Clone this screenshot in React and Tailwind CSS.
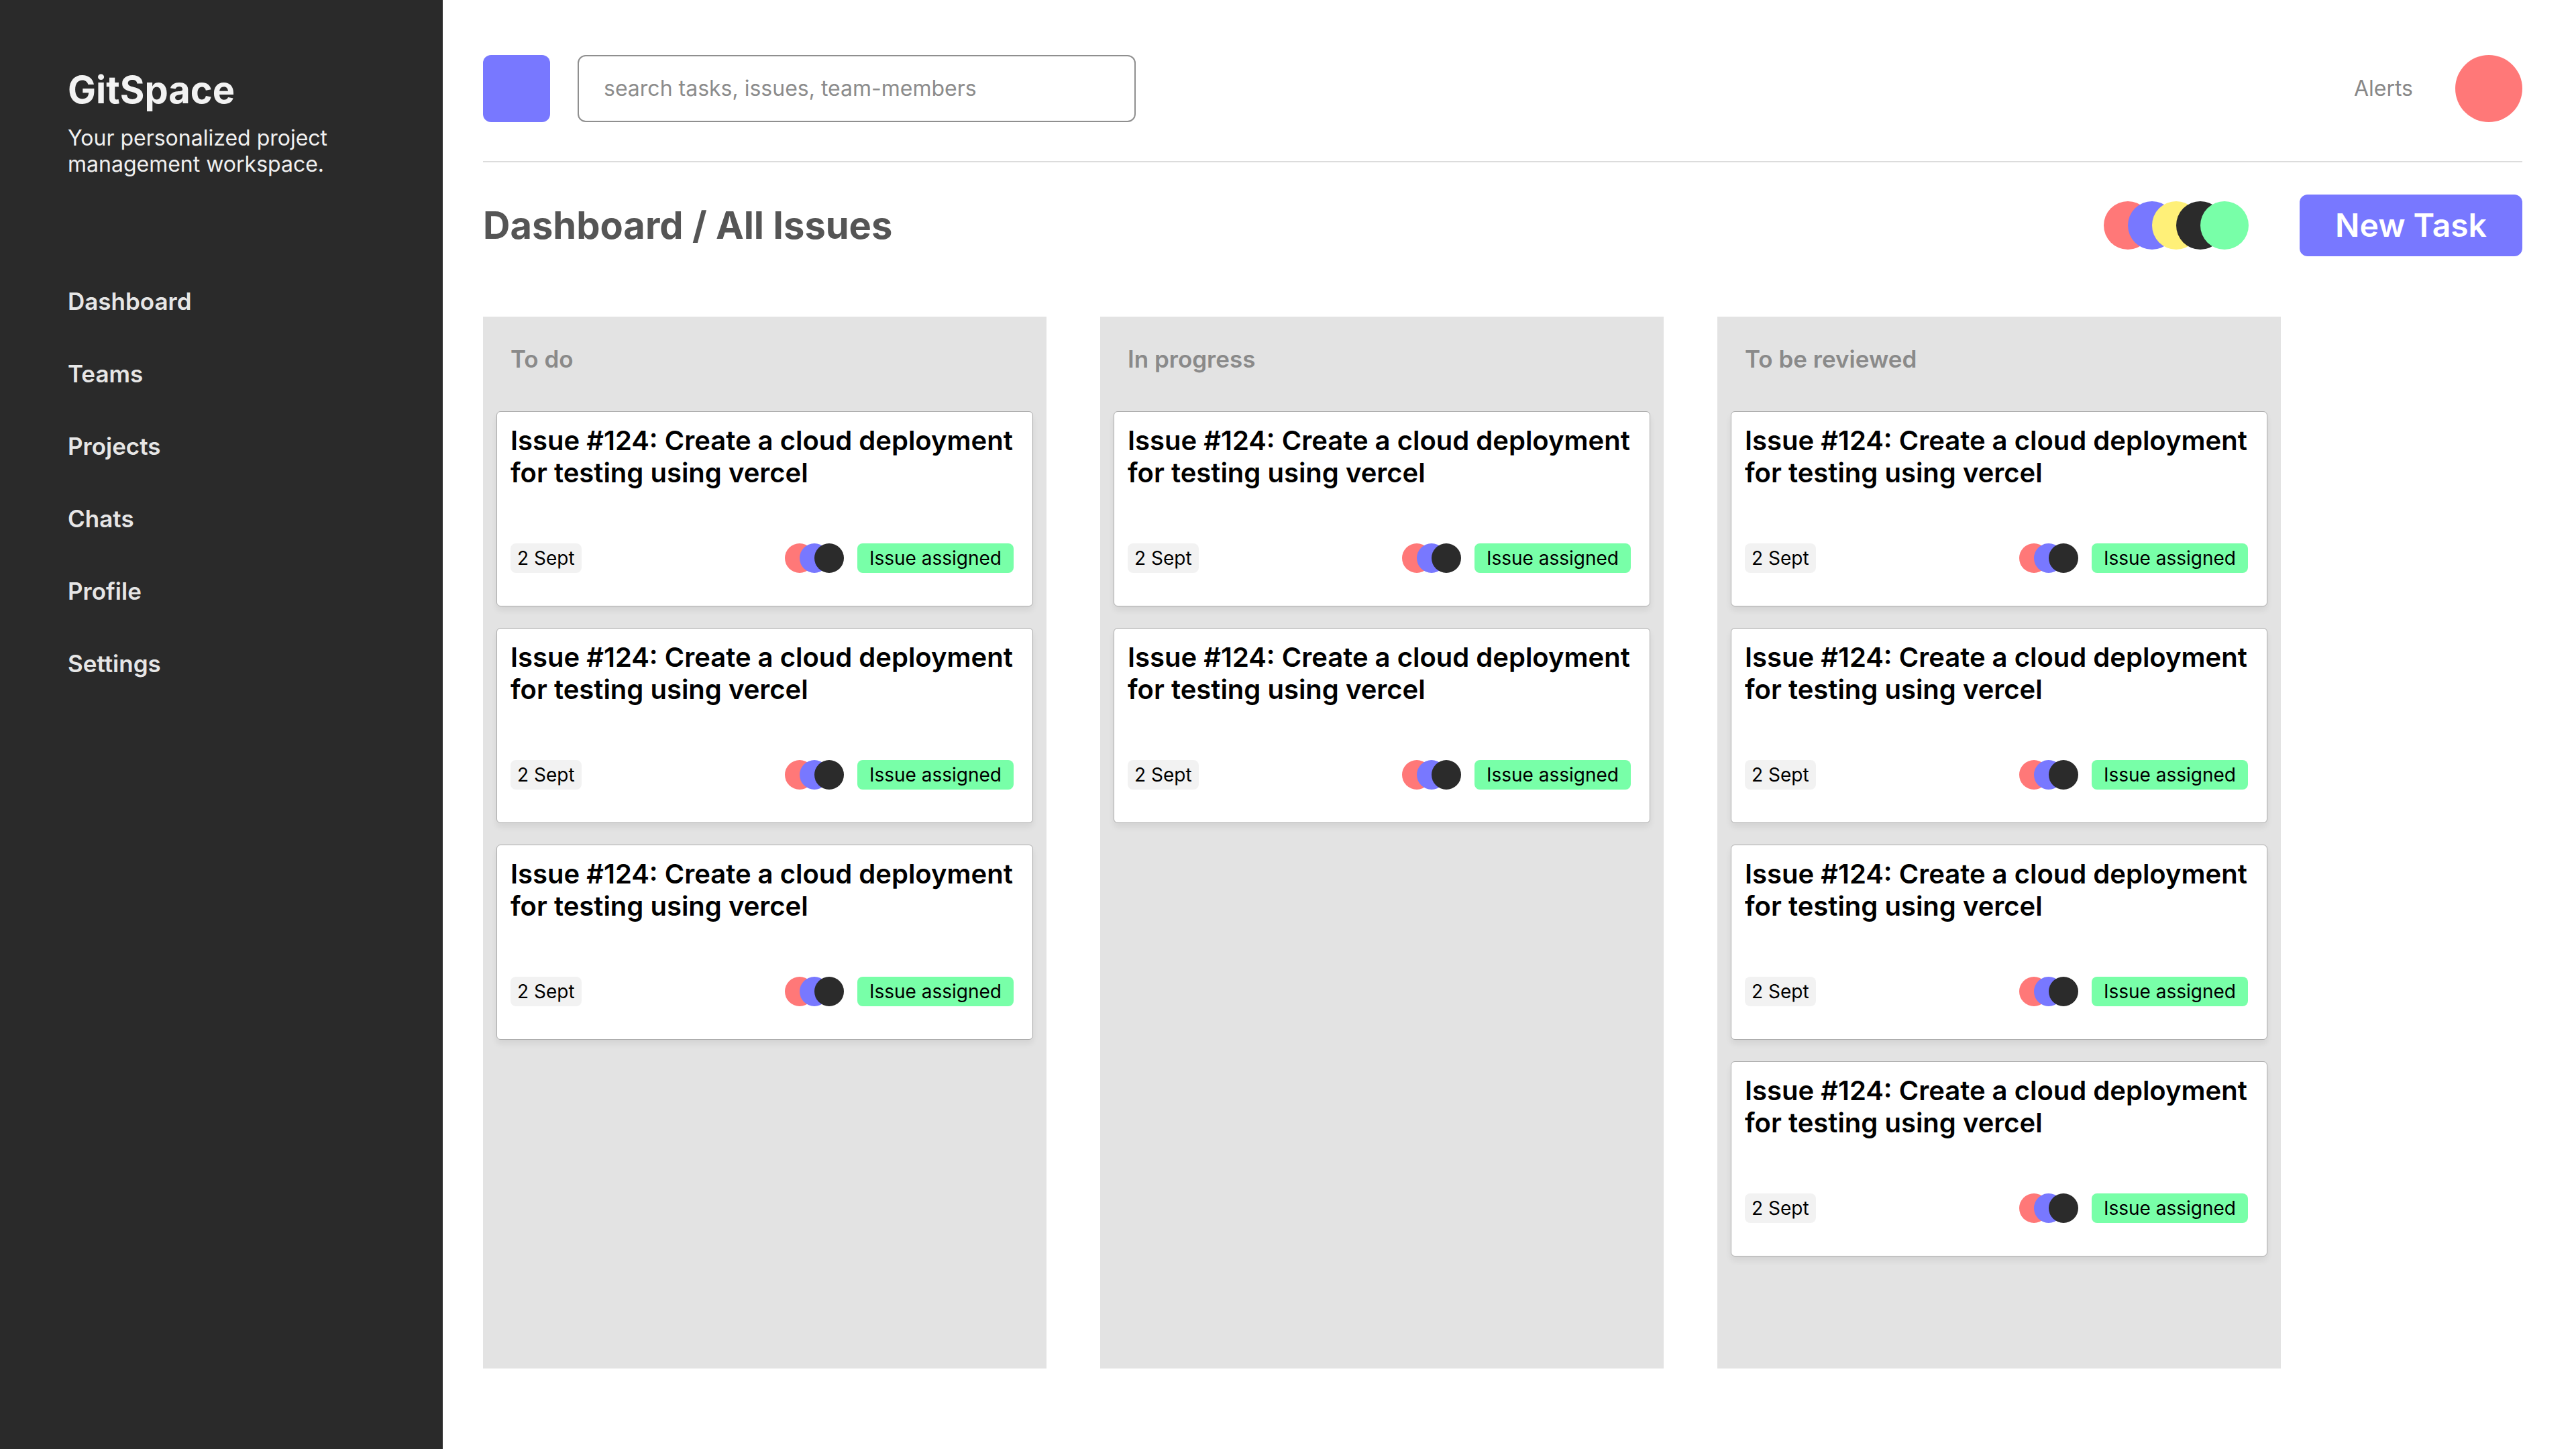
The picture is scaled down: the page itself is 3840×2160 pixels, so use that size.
import React from 'react';

const navItems = ['Dashboard', 'Teams', 'Projects', 'Chats', 'Profile', 'Settings'];

const columns = [
  { title: 'To do', count: 3 },
  { title: 'In progress', count: 2 },
  { title: 'To be reviewed', count: 4 },
];

const teamColors = ['bg-[#ff7878]', 'bg-[#7878ff]', 'bg-[#fff078]', 'bg-[#2b2b2b]', 'bg-[#78ffa8]'];
const cardColors = ['bg-[#ff7878]', 'bg-[#7878ff]', 'bg-[#2b2b2b]'];

const IssueCard = () => (
  <div className="rounded-[6px] border border-[#ababab] bg-white pt-[19px] pl-[20px] pr-[20px] pb-[49px] shadow-[0_6px_10px_rgba(0,0,0,0.07)]">
    <p className="whitespace-nowrap text-[40px] font-semibold leading-[48px] text-black">
      Issue #124: Create a cloud deployment
      <br />
      for testing using vercel
    </p>
    <div className="mt-[81px] flex items-center justify-between pr-[8px]">
      <span className="rounded-[8px] bg-[#f2f2f2] px-[10px] text-[28px] leading-[44px] text-black">2 Sept</span>
      <div className="flex items-center gap-5">
        <div className="flex">
          {cardColors.map((c, i) => (
            <div key={i} className={`h-[44px] w-[44px] rounded-full ${c} ${i > 0 ? '-ml-[22px]' : ''}`} />
          ))}
        </div>
        <span className="rounded-[8px] bg-[#78ffa8] px-[18px] text-[28px] leading-[44px] text-black">Issue assigned</span>
      </div>
    </div>
  </div>
);

const App = () => {
  return (
    <div className="flex h-[2160px] w-full bg-white font-['Inter',sans-serif]">
      {/* sidebar */}
      <aside className="w-[660px] shrink-0 bg-[#2a2a2a] pl-[101px] pt-[100px]">
        <h1 className="text-[56px] font-bold leading-[68px] text-[#f2f2f2]">GitSpace</h1>
        <p className="mt-[18px] text-[32px] leading-[39px] text-[#f0f0f0]">
          Your personalized project
          <br />
          management workspace.
        </p>
        <nav className="mt-[164px] flex flex-col gap-[66px]">
          {navItems.map((item) => (
            <a key={item} className="text-[35px] font-semibold leading-[42px] text-[#e6e6e6]">
              {item}
            </a>
          ))}
        </nav>
      </aside>

      {/* main */}
      <main className="flex-1 pl-[60px] pr-[80px] pt-[82px]">
        <header className="flex h-[100px] items-center">
          <div className="h-[100px] w-[100px] rounded-[12px] bg-[#7878ff]" />
          <div className="ml-[41px] flex h-[100px] w-[832px] items-center rounded-[12px] border-2 border-[#8f8f8f] px-[37px]">
            <input
              type="text"
              placeholder="search tasks, issues, team-members"
              className="w-full bg-transparent text-[32px] text-[#8c8c8c] outline-none placeholder:text-[#8c8c8c]"
            />
          </div>
          <span className="ml-auto text-[32px] text-[#888888]">Alerts</span>
          <div className="ml-[63px] h-[100px] w-[100px] rounded-full bg-[#ff7878]" />
        </header>

        <div className="mt-[58px] h-[2px] bg-[#dcdcdc]" />

        <div className="mt-[48px] flex h-[92px] items-center">
          <h2 className="text-[56px] font-bold text-[#555555]">Dashboard / All Issues</h2>
          <div className="ml-auto flex">
            {teamColors.map((c, i) => (
              <div key={i} className={`h-[72px] w-[72px] rounded-full ${c} ${i > 0 ? '-ml-[36px]' : ''}`} />
            ))}
          </div>
          <button className="ml-[76px] h-[92px] w-[332px] rounded-[12px] bg-[#7878ff] text-[48px] font-semibold text-white">
            New Task
          </button>
        </div>

        <section className="mt-[90px] flex gap-20">
          {columns.map((col) => (
            <div key={col.title} className="h-[1568px] w-[840px] bg-[#e3e3e3] px-5 pt-[42px]">
              <h3 className="pl-[21px] text-[35px] font-semibold leading-[42px] text-[#8a8a8a]">{col.title}</h3>
              <div className="mt-[57px] flex flex-col gap-8">
                {Array.from({ length: col.count }).map((_, i) => (
                  <IssueCard key={i} />
                ))}
              </div>
            </div>
          ))}
        </section>
      </main>
    </div>
  );
};

export default App;
